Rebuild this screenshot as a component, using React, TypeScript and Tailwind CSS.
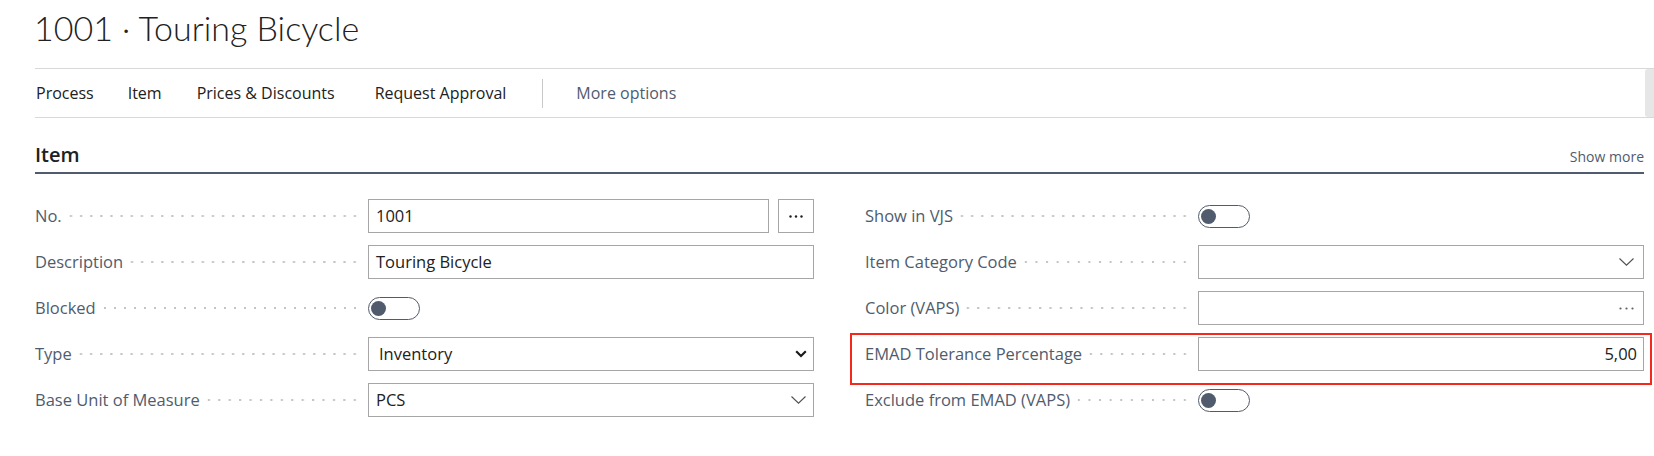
import type { ReactNode } from "react";

const FONT = "font-['Open_Sans','Noto_Sans',sans-serif]";

function Dots() {
  return (
    <div className="flex-1 h-[4px] ml-[4px] mr-[8px] bg-[radial-gradient(circle,#c4c4c4_0.9px,transparent_1.4px)] bg-[length:10px_4px] bg-repeat-space" />
  );
}

function Field({ label, children }: { label: string; children: ReactNode }) {
  return (
    <div className="grid grid-cols-[333px_1fr] items-center h-[34px]">
      <div className="flex items-center min-w-0">
        <span className="text-[16.5px] text-[#505c6d] whitespace-nowrap">{label}</span>
        <Dots />
      </div>
      <div className="flex items-center h-full">{children}</div>
    </div>
  );
}

function Box({ children, className = "" }: { children?: ReactNode; className?: string }) {
  return (
    <div
      className={`flex-1 h-[34px] border border-[#a6a6a6] flex items-center px-[7px] text-[16.5px] text-[#212121] ${className}`}
    >
      {children}
    </div>
  );
}

function Toggle() {
  return (
    <div className="w-[52px] h-[23px] rounded-full border-[1.5px] border-[#505c6d] flex items-center px-[2px]">
      <div className="w-[15px] h-[15px] rounded-full bg-[#505c6d]" />
    </div>
  );
}

function ThinChevron() {
  return (
    <svg width="15" height="8" viewBox="0 0 15 8" fill="none" className="ml-auto">
      <path d="M0.5 0.5 L7.5 7.2 L14.5 0.5" stroke="#505050" strokeWidth="1.1" />
    </svg>
  );
}

function BoldChevron() {
  return (
    <svg width="12" height="8" viewBox="0 0 12 8" fill="none" className="ml-auto">
      <path d="M1.2 1.3 L6 6 L10.8 1.3" stroke="#1a1a1a" strokeWidth="2.2" />
    </svg>
  );
}

function GreyEllipsis() {
  return (
    <svg width="15" height="3" viewBox="0 0 15 3" className="ml-auto">
      <circle cx="1.5" cy="1.5" r="1.1" fill="#606060" />
      <circle cx="7.5" cy="1.5" r="1.1" fill="#606060" />
      <circle cx="13.5" cy="1.5" r="1.1" fill="#606060" />
    </svg>
  );
}

export default function App() {
  return (
    <div className={`w-[1654px] h-[456px] bg-white overflow-hidden ${FONT}`}>
      <div className="pl-[34px] pt-[8px]">
        <h1 className="font-['Lato','Open_Sans',sans-serif] text-[34px] leading-[40px] font-light text-[#212121]">
          1001 · Touring Bicycle
        </h1>
      </div>

      <div className="ml-[35px] mt-[20px] h-[50px] border-y border-[#d8d8d8] flex items-center">
        <div className="flex items-center pl-[1px] text-[16px] text-[#212121]">
          <span className="whitespace-nowrap">Process</span>
          <span className="ml-[34px] whitespace-nowrap">Item</span>
          <span className="ml-[35px] whitespace-nowrap">Prices &amp; Discounts</span>
          <span className="ml-[40px] whitespace-nowrap">Request Approval</span>
          <div className="ml-[36px] w-px h-[29px] bg-[#c8c8c8]" />
          <span className="ml-[33px] text-[#505c6d] whitespace-nowrap">More options</span>
        </div>
        <div className="ml-auto w-[9px] self-stretch rounded-l-[3px] bg-[#e6e6e6]" />
      </div>

      <div className="pl-[35px] pr-[10px] mt-[23px]">
        <div className="flex items-baseline justify-between border-b-2 border-[#505c6d] pb-[3px]">
          <h2 className="text-[20px] leading-[28px] font-semibold text-[#212121]">Item</h2>
          <span className="text-[14px] text-[#505c6d]">Show more</span>
        </div>

        <div className="grid grid-cols-2 gap-x-[51px] mt-[25px]">
          <div className="flex flex-col gap-[12px]">
            <Field label="No.">
              <Box>1001</Box>
              <div className="ml-[9px] w-[36px] h-[34px] border border-[#a6a6a6] flex items-center justify-center">
                <svg width="14" height="3" viewBox="0 0 14 3">
                  <circle cx="1.5" cy="1.5" r="1.2" fill="#202020" />
                  <circle cx="7" cy="1.5" r="1.2" fill="#202020" />
                  <circle cx="12.5" cy="1.5" r="1.2" fill="#202020" />
                </svg>
              </div>
            </Field>
            <Field label="Description">
              <Box>Touring Bicycle</Box>
            </Field>
            <Field label="Blocked">
              <Toggle />
            </Field>
            <Field label="Type">
              <Box className="pl-[10px] pr-[6px]">
                <span>Inventory</span>
                <BoldChevron />
              </Box>
            </Field>
            <Field label="Base Unit of Measure">
              <Box className="pr-[7px]">
                <span>PCS</span>
                <ThinChevron />
              </Box>
            </Field>
          </div>

          <div className="flex flex-col gap-[12px]">
            <Field label="Show in VJS">
              <Toggle />
            </Field>
            <Field label="Item Category Code">
              <Box className="pr-[9px]">
                <ThinChevron />
              </Box>
            </Field>
            <Field label="Color (VAPS)">
              <Box className="pr-[9px]">
                <GreyEllipsis />
              </Box>
            </Field>
            <div className="relative">
              <Field label="EMAD Tolerance Percentage">
                <Box className="justify-end pr-[6px]">5,00</Box>
              </Field>
              <div className="absolute -left-[15px] -right-[8px] -top-[4px] -bottom-[14px] border-2 border-[#f5281e] pointer-events-none" />
            </div>
            <Field label="Exclude from EMAD (VAPS)">
              <Toggle />
            </Field>
          </div>
        </div>
      </div>
    </div>
  );
}
